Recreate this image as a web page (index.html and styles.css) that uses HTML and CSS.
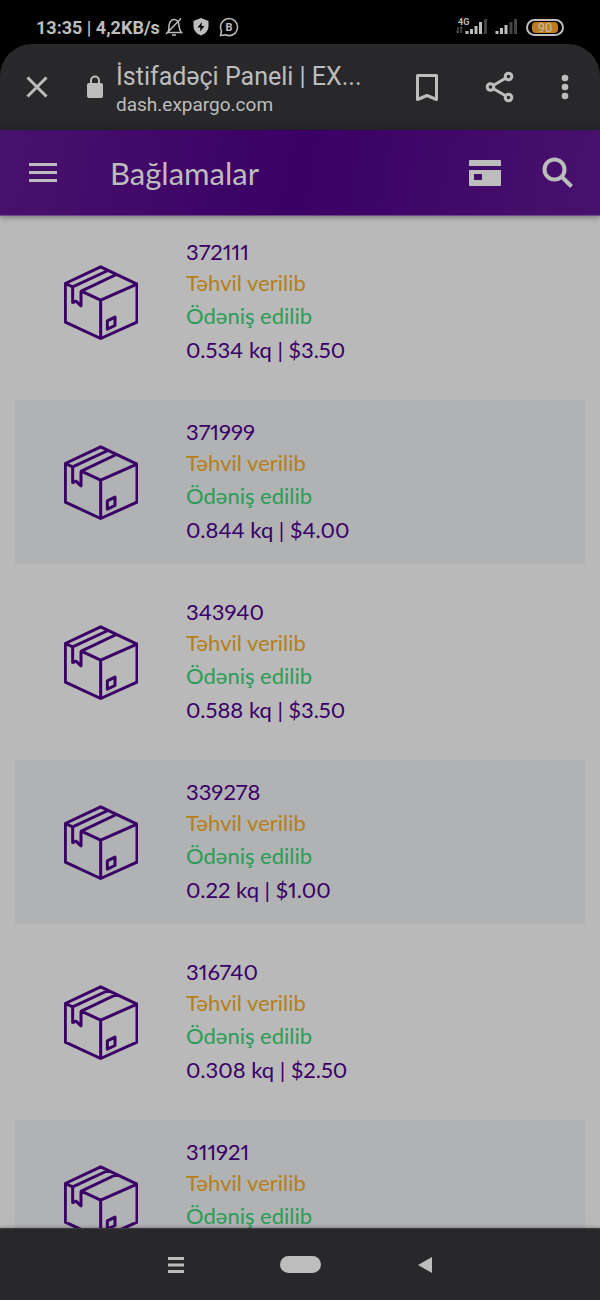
FILE: index.html
```
<!DOCTYPE html>
<html lang="az">
<head>
    <meta charset="UTF-8">
    <meta name="viewport" content="width=device-width, initial-scale=1.0">
    <title>İstifadəçi Paneli | EXPARGO</title>
    <link rel="stylesheet" href="styles.css">
</head>
<body>
    <svg class="defs" width="0" height="0">
        <symbol id="box" viewBox="43 43 222 224">
            <path d="M153 48L262 100V214L153 263L47 214V98ZM47 98L69 108L175 59M262 100L153 148V263M153 148L95 121L200 71M69 108V155L79 151L94 165V121M173 210L196 199V224L173 235Z"/>
        </symbol>
    </svg>

    <div class="status-bar">
        <span class="status-text">13:35 | 4,2KB/s</span>
        <svg class="bell" width="18" height="20" viewBox="0 0 18 20">
            <path d="M3 14.500C4.500 12.500 3.500 9 4.500 6.500C5.500 3.500 7 2.500 9 2.500C11.500 2.500 13.500 4 14 8C14.300 11 14 13 16.500 15.500H3M1 17L16 1.500M7 18H11"/>
        </svg>
        <svg class="shield" width="16" height="18" viewBox="0 0 16 18">
            <path fill="#bdbdbd" d="M8 0L15.500 3V8C15.500 13 12 16 8 17.500C4 16 .5 13 .5 8V3Z"/>
            <path fill="#000" d="M9 4L4.500 9.500H7.500L7 13.500L11.500 8H8.500Z"/>
        </svg>
        <svg class="bubble" width="20" height="20" viewBox="0 0 20 20">
            <path d="M1.500 18.500L2.500 14A8.500 8.500 0 1 1 6.500 17.800Z"/>
            <text x="10" y="14">B</text>
        </svg>
        <div class="status-right">
            <svg width="32" height="20" viewBox="0 0 32 20">
                <text class="net" x="2" y="8">4G</text>
                <path class="arrows" d="M2 10V16L.5 14.500M5 16V10L6.500 11.500"/>
                <path class="signal" d="M11 17V14M15.500 17V12M20 17V9M24.500 17V5"/>
                <path class="signal dim" d="M29.500 17V2"/>
            </svg>
            <svg class="signal-two" width="24" height="20" viewBox="0 0 24 20">
                <path class="signal" d="M3 17V14M7.500 17V11M12 17V8"/>
                <path class="signal dim" d="M17 17V5M21.500 17V2"/>
            </svg>
            <div class="battery"><span>90</span></div>
        </div>
    </div>

    <div class="browser-bar">
        <button class="icon-button" aria-label="Bağla">
            <svg class="line" width="24" height="24" viewBox="0 0 24 24"><path d="M2.500 2.500L21.500 21.500M21.500 2.500L2.500 21.500"/></svg>
        </button>
        <svg class="lock" width="18" height="24" viewBox="0 0 18 24">
            <rect x="1" y="8" width="16" height="15" rx="2"/>
            <path d="M5 9V5.500A4 4 0 0 1 13 5.500V9"/>
        </svg>
        <div class="page-info">
            <div class="page-title">İstifadəçi Paneli | EX...</div>
            <div class="page-url">dash.expargo.com</div>
        </div>
        <div class="browser-actions">
            <button class="icon-button" aria-label="Əlfəcin">
                <svg class="line" width="24" height="30" viewBox="0 0 24 30"><path stroke-linejoin="round" d="M2.500 3.500H21.500V27.500L12 23.500L2.500 27.500Z"/></svg>
            </button>
            <button class="icon-button" aria-label="Paylaş">
                <svg class="line" width="30" height="32" viewBox="0 0 30 32"><path d="M5.500 16L23.500 5.500M5.500 16L23.500 26.500"/><g fill="#28282a"><circle cx="5.500" cy="16" r="3.300"/><circle cx="23.500" cy="5.500" r="3.300"/><circle cx="23.500" cy="26.500" r="3.300"/></g></svg>
            </button>
            <button class="icon-button" aria-label="Menyu">
                <svg width="8" height="28" viewBox="0 0 8 28" fill="#bdbdbd"><circle cx="4" cy="5" r="3.300"/><circle cx="4" cy="14" r="3.300"/><circle cx="4" cy="23" r="3.300"/></svg>
            </button>
        </div>
    </div>

    <header class="app-bar">
        <button class="icon-button" aria-label="Naviqasiya">
            <svg width="28" height="20" viewBox="0 0 28 20" fill="#bdbdbd"><path d="M0 0H28V3H0ZM0 8H28V11H0ZM0 16H28V19H0Z"/></svg>
        </button>
        <h1>Bağlamalar</h1>
        <div class="app-actions">
            <button class="icon-button" aria-label="Kart">
                <svg width="34" height="26" viewBox="0 0 34 26" fill="#bdbdbd"><path fill-rule="evenodd" d="M2 0H32Q33 0 33 1V6H1V1Q1 0 2 0ZM1 10H33V25Q33 26 32 26H2Q1 26 1 25ZM6 14V20H14V14Z"/></svg>
            </button>
            <button class="icon-button" aria-label="Axtar">
                <svg class="search" width="32" height="32" viewBox="0 0 32 32"><circle cx="12.500" cy="12.500" r="10"/><path d="M20 20L29.500 29.500"/></svg>
            </button>
        </div>
    </header>

    <main class="list">
        <article class="package">
            <svg class="box"><use href="#box"/></svg>
            <div class="info">
                <div class="number">372111</div>
                <div class="delivered">Təhvil verilib</div>
                <div class="paid">Ödəniş edilib</div>
                <div>0.534 kq | $3.50</div>
            </div>
        </article>
        <article class="package">
            <svg class="box"><use href="#box"/></svg>
            <div class="info">
                <div class="number">371999</div>
                <div class="delivered">Təhvil verilib</div>
                <div class="paid">Ödəniş edilib</div>
                <div>0.844 kq | $4.00</div>
            </div>
        </article>
        <article class="package">
            <svg class="box"><use href="#box"/></svg>
            <div class="info">
                <div class="number">343940</div>
                <div class="delivered">Təhvil verilib</div>
                <div class="paid">Ödəniş edilib</div>
                <div>0.588 kq | $3.50</div>
            </div>
        </article>
        <article class="package">
            <svg class="box"><use href="#box"/></svg>
            <div class="info">
                <div class="number">339278</div>
                <div class="delivered">Təhvil verilib</div>
                <div class="paid">Ödəniş edilib</div>
                <div>0.22 kq | $1.00</div>
            </div>
        </article>
        <article class="package">
            <svg class="box"><use href="#box"/></svg>
            <div class="info">
                <div class="number">316740</div>
                <div class="delivered">Təhvil verilib</div>
                <div class="paid">Ödəniş edilib</div>
                <div>0.308 kq | $2.50</div>
            </div>
        </article>
        <article class="package">
            <svg class="box"><use href="#box"/></svg>
            <div class="info">
                <div class="number">311921</div>
                <div class="delivered">Təhvil verilib</div>
                <div class="paid">Ödəniş edilib</div>
            </div>
        </article>
    </main>

    <nav class="system-nav">
        <button class="icon-button" aria-label="Son tətbiqlər">
            <svg width="16" height="16" viewBox="0 0 16 16" fill="#bdbdbd"><path d="M0 0H16V3H0ZM0 6.500H16V9.500H0ZM0 13H16V16H0Z"/></svg>
        </button>
        <button class="home" aria-label="Ana ekran"></button>
        <button class="icon-button" aria-label="Geri">
            <svg width="16" height="18" viewBox="0 0 16 18" fill="#bdbdbd"><path d="M15 1V17L1 9Z"/></svg>
        </button>
    </nav>
</body>
</html>
```
FILE: styles.css
```
* {
    box-sizing: border-box;
}
body {
    display: flex;
    flex-direction: column;
    height: 100vh;
    margin: 0;
    background-color: #000;
    color: #bdbdbd;
    font-family: Roboto, sans-serif;
    overflow: hidden;
}
svg {
    display: block;
    flex-shrink: 0;
}
.defs {
    position: absolute;
}
.icon-button {
    display: flex;
    padding: 0;
    border: none;
    background: none;
    cursor: pointer;
}

/* status bar */
.status-bar {
    display: flex;
    align-items: center;
    flex-shrink: 0;
    height: 44px;
    padding: 10px 36px 0;
}
.status-text {
    font-size: 18px;
    font-weight: 700;
    white-space: nowrap;
}
.bell,
.bubble {
    fill: none;
    stroke: #bdbdbd;
    stroke-width: 1.5;
}
.bell {
    margin-left: 5px;
}
.shield {
    margin-left: 10px;
}
.bubble {
    margin-left: 10px;
}
.bubble text {
    fill: #bdbdbd;
    stroke: none;
    font-size: 11px;
    font-weight: 700;
    text-anchor: middle;
}
.status-right {
    display: flex;
    align-items: center;
    margin-left: auto;
}
.net {
    fill: #bdbdbd;
    font-size: 9px;
    font-weight: 700;
}
.arrows {
    fill: none;
    stroke: #777;
}
.signal {
    stroke: #bdbdbd;
    stroke-width: 3;
}
.dim {
    stroke: #444;
}
.signal-two {
    margin-left: 6px;
}
.battery {
    width: 38px;
    height: 17px;
    margin-left: 8px;
    padding: 1px 4px;
    border: 2px solid #bdbdbd;
    border-radius: 9px;
}
.battery span {
    display: block;
    border-radius: 4px;
    background-color: #bd7d1c;
    font-size: 13px;
    line-height: 11px;
    text-align: center;
}

/* browser */
.browser-bar {
    display: flex;
    align-items: center;
    flex-shrink: 0;
    height: 86px;
    padding: 0 31px 0 25px;
    border-radius: 32px 32px 0 0;
    background-color: #28282a;
}
.line {
    fill: none;
    stroke: #bdbdbd;
    stroke-width: 3;
}
.lock {
    margin-left: 37px;
    fill: #bdbdbd;
}
.lock path {
    fill: none;
    stroke: #bdbdbd;
    stroke-width: 2;
}
.page-info {
    margin-left: 12px;
    padding-top: 5px;
    white-space: nowrap;
}
.page-title {
    font-size: 25px;
    line-height: 30px;
}
.page-url {
    font-size: 19px;
    line-height: 26px;
}
.browser-actions {
    display: flex;
    align-items: center;
    gap: 46px;
    margin-left: auto;
}

/* app header */
.app-bar {
    display: flex;
    align-items: center;
    flex-shrink: 0;
    height: 86px;
    padding: 0 26px 0 29px;
    background: linear-gradient(100deg, #47126c, #3a0066 50%, #47126c);
    border-bottom: 1px solid #6b4a86;
    box-shadow: 0 1px 6px rgba(0,0,0,0.4);
    z-index: 1;
}
.app-bar h1 {
    margin: 0 0 0 53px;
    font-family: Lato, sans-serif;
    font-size: 31px;
    font-weight: 400;
    line-height: 36px;
}
.app-actions {
    display: flex;
    align-items: center;
    gap: 40px;
    margin-left: auto;
}
.search {
    fill: none;
    stroke: #bdbdbd;
    stroke-width: 4;
}

/* packages */
.list {
    display: flex;
    flex-direction: column;
    flex: 1;
    gap: 16px;
    min-height: 0;
    padding: 4px 15px 0;
    overflow: hidden;
    background-color: #b9b9b9;
}
.package {
    display: grid;
    grid-template-columns: 3fr 7fr;
    align-items: center;
    flex-shrink: 0;
    height: 164px;
    color: #3a0066;
    font-family: Lato, sans-serif;
    font-size: 22px;
    font-variant-numeric: proportional-nums;
    line-height: 33px;
}
.package:nth-child(even) {
    background-color: #b0b2b4;
}
.box {
    width: 74px;
    height: 75px;
    justify-self: center;
    fill: none;
    stroke: #3a0066;
    stroke-width: 9;
    stroke-linejoin: round;
}
.info {
    align-self: start;
    padding-top: 17px;
}
.number {
    line-height: 30px;
}
.delivered {
    color: #b57f17;
    line-height: 31px;
}
.paid {
    color: #2a9d58;
    line-height: 35px;
}

/* phone navigation */
.system-nav {
    display: flex;
    align-items: center;
    justify-content: center;
    gap: 96px;
    flex-shrink: 0;
    height: 72px;
    border-top: 1px solid #3c3c40;
    background-color: #28282a;
    box-shadow: 0 0 4px rgba(0,0,0,0.4);
    z-index: 1;
}
.home {
    width: 41px;
    height: 17px;
    padding: 0;
    border: none;
    border-radius: 9px;
    background-color: #bdbdbd;
}
```
